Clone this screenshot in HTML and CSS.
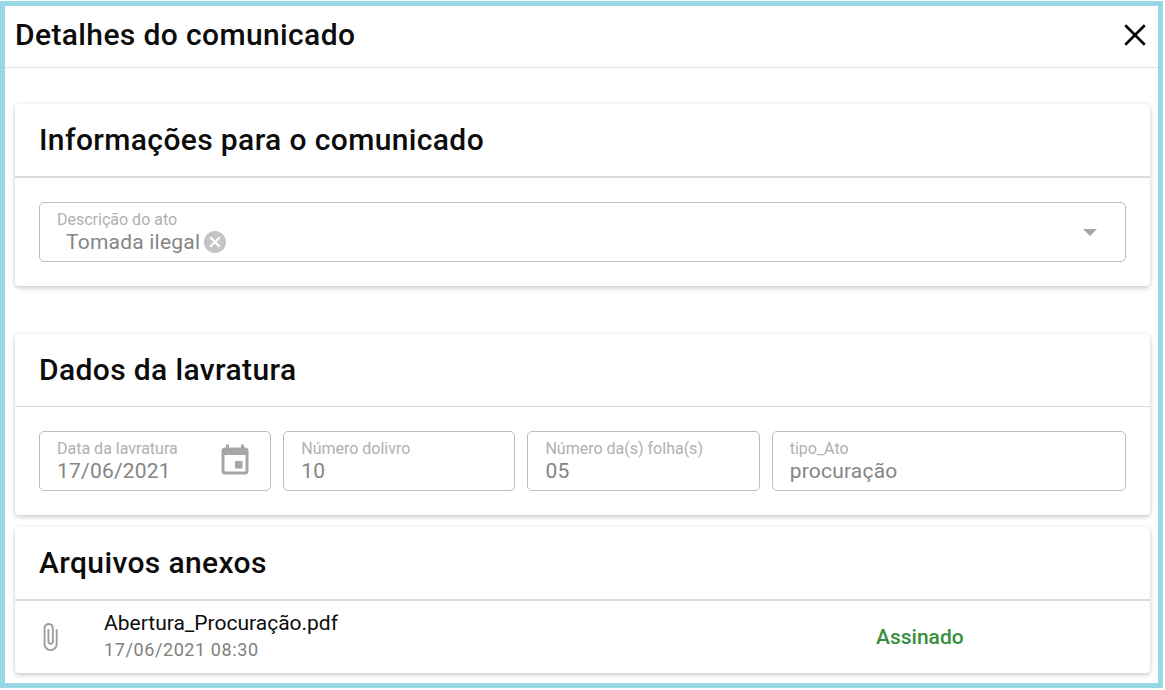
FILE: index.html
```html
<!DOCTYPE html>
<html lang="pt-BR">
<head>
    <meta charset="UTF-8">
    <meta name="viewport" content="width=device-width, initial-scale=1.0">
    <title>Detalhes do comunicado</title>
    <link rel="stylesheet" href="styles.css">
</head>
<body>
    <div class="dialog">
        <header class="dialog-header">
            <h1>Detalhes do comunicado</h1>
            <button type="button" class="close" aria-label="Fechar">
                <svg viewBox="0 0 24 24"><path d="M3 3L21 21M21 3L3 21"/></svg>
            </button>
        </header>

        <main class="content">
            <section class="card card-info">
                <h2>Informações para o comunicado</h2>
                <div class="card-body">
                    <div class="field">
                        <label for="descricao">Descrição do ato</label>
                        <div class="chip-row">
                            <select id="descricao" name="descricao">
                                <option>Tomada ilegal</option>
                            </select>
                            <button type="button" class="chip-remove" aria-label="Remover">
                                <svg viewBox="2 2 20 20"><path d="M12 2C6.47 2 2 6.47 2 12s4.47 10 10 10 10-4.47 10-10S17.53 2 12 2zm5 13.59L15.59 17 12 13.41 8.41 17 7 15.59 10.59 12 7 8.41 8.41 7 12 10.59 15.59 7 17 8.41 13.41 12 17 15.59z"/></svg>
                            </button>
                        </div>
                        <svg class="arrow" viewBox="0 0 14 7"><path d="M0 0h14L7 7z"/></svg>
                    </div>
                </div>
            </section>

            <section class="card card-lavratura">
                <h2>Dados da lavratura</h2>
                <form class="card-body fields">
                    <div class="field">
                        <label for="data">Data da lavratura</label>
                        <input type="text" id="data" name="data" value="17/06/2021" readonly>
                        <button type="button" class="calendar" aria-label="Abrir calendário">
                            <svg viewBox="0 0 24 24"><path d="M17 12h-5v5h5v-5zM16 1v2H8V1H6v2H5c-1.11 0-1.99.9-1.99 2L3 19c0 1.1.89 2 2 2h14c1.1 0 2-.9 2-2V5c0-1.1-.9-2-2-2h-1V1h-2zm3 18H5V8h14v11z"/></svg>
                        </button>
                    </div>
                    <div class="field">
                        <label for="livro">Número dolivro</label>
                        <input type="text" id="livro" name="livro" value="10" readonly>
                    </div>
                    <div class="field">
                        <label for="folhas">Número da(s) folha(s)</label>
                        <input type="text" id="folhas" name="folhas" value="05" readonly>
                    </div>
                    <div class="field field-wide">
                        <label for="tipo">tipo_Ato</label>
                        <input type="text" id="tipo" name="tipo" value="procuração" readonly>
                    </div>
                </form>
            </section>

            <section class="card card-arquivos">
                <h2>Arquivos anexos</h2>
                <ul class="files">
                    <li class="file">
                        <svg class="clip" viewBox="6 1 12 22"><path d="M16.5 6v11.5c0 2.21-1.79 4-4 4s-4-1.79-4-4V5c0-1.38 1.12-2.5 2.5-2.5s2.5 1.12 2.5 2.5v10.5c0 .55-.45 1-1 1s-1-.45-1-1V6H10v9.5c0 1.38 1.12 2.5 2.5 2.5s2.5-1.12 2.5-2.5V5c0-2.21-1.79-4-4-4S7 2.79 7 5v12.5c0 3.04 2.46 5.5 5.5 5.5s5.5-2.46 5.5-5.5V6h-1.5z"/></svg>
                        <div class="file-info">
                            <div class="file-name">Abertura_Procuração.pdf</div>
                            <div class="file-date">17/06/2021 08:30</div>
                        </div>
                        <div class="file-status">Assinado</div>
                    </li>
                </ul>
            </section>
        </main>
    </div>
</body>
</html>
```
FILE: styles.css
```css
* {
    box-sizing: border-box;
}

body {
    margin: 0;
    padding: 1px 2px 2px 0;
    min-height: 100vh;
    display: flex;
    background: #fff;
    color: #0c0c0c;
    font-family: Roboto, Arial, sans-serif;
}

h1, h2 {
    margin: 0;
    font-size: 30px;
    font-weight: 500;
    line-height: 40px;
    letter-spacing: 0.0125em;
}

button {
    padding: 0;
    border: none;
    background: none;
    cursor: pointer;
}

svg {
    display: block;
    fill: currentColor;
}

.dialog {
    flex: 1;
    border: 5px solid #98d8e4;
}

.dialog-header {
    display: flex;
    align-items: center;
    justify-content: space-between;
    padding: 9px 10px 12px;
    border-bottom: 1px solid #e0e0e0;
}

.close {
    color: #000;
}

.close svg {
    width: 26px;
    height: 26px;
    stroke: currentColor;
    stroke-width: 2.4;
}

.content {
    padding: 36px 8px 8px 10px;
}

.card {
    background: #fff;
    border-radius: 4px;
    box-shadow: 0 1px 5px rgba(0, 0, 0, 0.16), 0 3px 4px rgba(0, 0, 0, 0.08);
}

.card h2 {
    padding: 16px 24px;
    border-bottom: 2px solid #dcdcdc;
}

.card-info {
    margin-bottom: 48px;
}

.card-lavratura {
    margin-bottom: 12px;
}

.card-lavratura h2 {
    border-bottom-width: 1px;
}

.card-body {
    padding: 24px;
}

.fields {
    display: grid;
    grid-template-columns: repeat(9, 1fr);
    gap: 12px;
}

.field {
    position: relative;
    grid-column: span 2;
    padding: 7px 17px;
    border: 1px solid #bdbdbd;
    border-radius: 5px;
}

.field-wide {
    grid-column: span 3;
}

.field label {
    display: block;
    font-size: 16px;
    line-height: 20px;
    color: #b0b0b0;
}

.field input,
.field select {
    display: block;
    height: 24px;
    padding: 0;
    border: none;
    outline: none;
    background: none;
    color: #858585;
    font: 21px/24px Roboto, Arial, sans-serif;
    letter-spacing: 0.01em;
}

.field input {
    width: 100%;
}

.field select {
    appearance: none;
}

.chip-row {
    display: flex;
    align-items: center;
    gap: 3px;
    padding-left: 9px;
}

.chip-remove {
    color: #c4c4c4;
}

.chip-remove svg {
    width: 22px;
    height: 22px;
}

.arrow {
    position: absolute;
    top: 26px;
    right: 28px;
    width: 14px;
    height: 7px;
    color: #a6a6a6;
}

.calendar {
    position: absolute;
    top: 11px;
    right: 17px;
    color: #a6a6a6;
}

.calendar svg {
    width: 36px;
    height: 36px;
}

.files {
    margin: 0;
    padding: 0;
    list-style: none;
}

.file {
    display: flex;
    align-items: center;
    padding: 9px 24px;
}

.clip {
    width: 16px;
    height: 28px;
    margin: 0 46px 0 3px;
    color: #9e9e9e;
}

.file-info {
    flex: 1;
}

.file-name {
    font-size: 21px;
    line-height: 26px;
}

.file-date {
    font-size: 18px;
    line-height: 28px;
    letter-spacing: 0.0333em;
    color: #808080;
}

.file-status {
    width: 23%;
    font-size: 21px;
    font-weight: 500;
    color: #388e3c;
}
```
